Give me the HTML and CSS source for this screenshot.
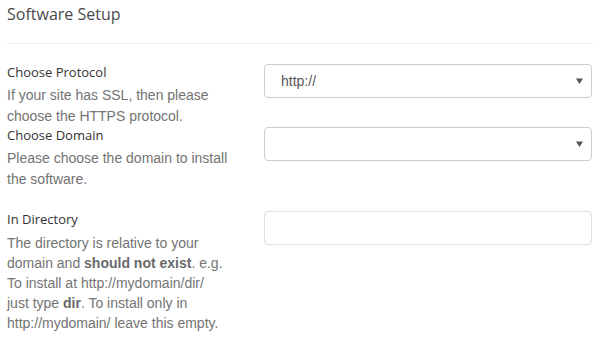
FILE: index.html
```html
<!DOCTYPE html>
<html>
<head>
<meta charset="utf-8">
<link rel="stylesheet" href="styles.css">
</head>
<body>
<div class="panel">
  <h2 class="title">Software Setup</h2>
  <hr class="divider">
  <div class="form">
    <div class="row">
      <div class="info">
        <div class="label">Choose Protocol</div>
        <div class="help">If your site has SSL, then please choose the HTTPS protocol.</div>
      </div>
      <div class="control">
        <div class="select">
          <span class="value">http://</span>
          <svg class="caret" width="7" height="6" viewBox="0 0 7 6"><path d="M0 0.5 H7 L3.5 6 Z" fill="#555"/></svg>
        </div>
      </div>
    </div>
    <div class="row">
      <div class="info">
        <div class="label">Choose Domain</div>
        <div class="help">Please choose the domain to install the software.</div>
      </div>
      <div class="control">
        <div class="select">
          <span class="value"></span>
          <svg class="caret" width="7" height="6" viewBox="0 0 7 6"><path d="M0 0.5 H7 L3.5 6 Z" fill="#555"/></svg>
        </div>
      </div>
    </div>
    <div class="row row-dir">
      <div class="info">
        <div class="label">In Directory</div>
        <div class="help help-dir">The directory is relative to your<br>domain and <b>should not exist</b>. e.g.<br>To install at http://mydomain/dir/<br>just type <b>dir</b>. To install only in<br>http://mydomain/ leave this empty.</div>
      </div>
      <div class="control">
        <div class="input"></div>
      </div>
    </div>
  </div>
</div>
</body>
</html>
```
FILE: styles.css
```css
html, body {
  margin: 0;
  padding: 0;
  background: #fff;
}
.panel {
  padding: 0 13px 0 7px;
}
.title {
  margin: 0;
  padding-top: 4px;
  font-family: "Open Sans", "Liberation Sans", sans-serif;
  font-weight: 500;
  font-size: 16px;
  line-height: 20px;
  color: #4a4a4a;
}
.divider {
  margin: 19px 0 20px 0;
  border: 0;
  border-top: 1px solid #eee;
  height: 0;
}
.form {
  display: flex;
  flex-direction: column;
}
.row {
  display: grid;
  grid-template-columns: 242px 328px;
  column-gap: 15px;
  align-items: start;
}
.row-dir {
  margin-top: 21px;
}
.label {
  font-family: "Open Sans", "Liberation Sans", sans-serif;
  font-weight: 500;
  font-size: 13px;
  line-height: 17px;
  color: #333;
}
.help {
  margin-top: 4px;
  font-family: "Liberation Sans", Arial, sans-serif;
  font-size: 14px;
  line-height: 21px;
  color: #737373;
  padding-right: 18px;
}
.help-dir {
  margin-top: 5px;
  line-height: 20px;
  padding-right: 0;
  white-space: nowrap;
}
.help b {
  font-weight: 700;
  color: #6a6a6a;
}
.select, .input {
  box-sizing: border-box;
  height: 34px;
  border: 1px solid #ccc;
  border-radius: 4px;
  background: #fff;
}
.select {
  display: flex;
  align-items: center;
  justify-content: space-between;
  padding: 0 8px 0 16px;
  font-family: "Liberation Sans", Arial, sans-serif;
  font-size: 14px;
  color: #555;
}
.input {
  border-color: #e0e0e0;
}
.caret {
  display: block;
}
```
